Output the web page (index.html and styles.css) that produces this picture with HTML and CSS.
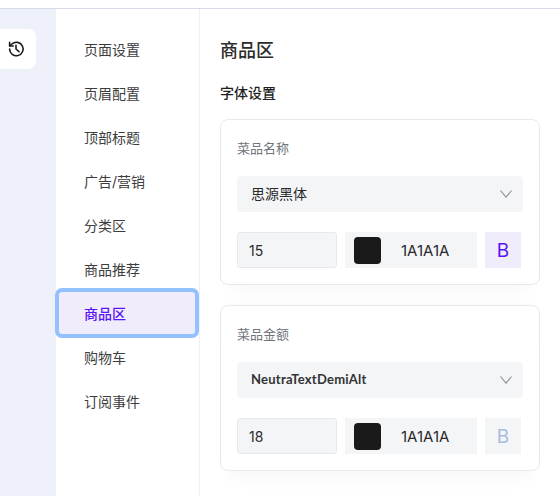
FILE: index.html
```html
<!DOCTYPE html>
<html lang="zh-CN">
<head>
<meta charset="utf-8">
<title>商品区</title>
<link rel="stylesheet" href="styles.css">
</head>
<body>
<div class="app">
  <aside class="rail">
    <button class="history" aria-label="历史记录">
      <svg width="18" height="18" viewBox="0 0 24 24" fill="none" stroke="#1a1a1a" stroke-width="2.1" stroke-linecap="round" stroke-linejoin="round"><path d="M3.5 12a9 9 0 1 0 3-6.7L3.5 8"/><path d="M3.5 3.2V8h4.8"/><path d="M12 7v5l4 3.5"/></svg>
    </button>
  </aside>
  <nav class="nav">
    <a class="nav-item">页面设置</a>
    <a class="nav-item">页眉配置</a>
    <a class="nav-item">顶部标题</a>
    <a class="nav-item">广告/营销</a>
    <a class="nav-item">分类区</a>
    <a class="nav-item">商品推荐</a>
    <a class="nav-item active">商品区</a>
    <a class="nav-item">购物车</a>
    <a class="nav-item">订阅事件</a>
  </nav>
  <main class="main">
    <h1 class="title">商品区</h1>
    <h2 class="subtitle">字体设置</h2>
    <section class="card">
      <div class="label">菜品名称</div>
      <div class="select"><span class="value">思源黑体</span>
        <svg class="chev" width="12" height="8" viewBox="0 0 12 8" fill="none" stroke="#8b8f98" stroke-width="1.1"><path d="M.5 .5L6 7.2 11.5 .5"/></svg>
      </div>
      <div class="controls">
        <div class="size">15</div>
        <div class="color"><i class="swatch"></i><span>1A1A1A</span></div>
        <div class="bold on">B</div>
      </div>
    </section>
    <section class="card">
      <div class="label">菜品金额</div>
      <div class="select"><span class="value latin">NeutraTextDemiAlt</span>
        <svg class="chev" width="12" height="8" viewBox="0 0 12 8" fill="none" stroke="#8b8f98" stroke-width="1.1"><path d="M.5 .5L6 7.2 11.5 .5"/></svg>
      </div>
      <div class="controls">
        <div class="size">18</div>
        <div class="color"><i class="swatch"></i><span>1A1A1A</span></div>
        <div class="bold">B</div>
      </div>
    </section>
  </main>
</div>
</body>
</html>
```
FILE: styles.css
```css
* { box-sizing: border-box; }
html, body { margin: 0; height: 100%; overflow: hidden; background: #fff; }
body { font-family: Inter, "Noto Sans CJK SC", sans-serif; color: #1a1a1a; padding-top: 8px; }
.app { display: flex; height: 488px; border-top: 1px solid #d5d9e8; }
.rail { width: 56px; flex: none; background: #eef1f9; padding-top: 20px; }
.history { display: flex; align-items: center; justify-content: center; width: 36px; height: 40px; padding: 0 4px 0 0; border: 0; background: #fff; border-radius: 0 8px 8px 0; }
.nav { width: 144px; flex: none; display: flex; flex-direction: column; border-right: 1px solid #eef0f4; padding-top: 19px; }
.nav-item { height: 44px; flex: none; display: flex; align-items: center; padding-left: 28px; font-size: 14px; line-height: 20px; color: #3d3d3d; }
.nav-item.active { position: relative; background: #f0ecfc; color: #5b14f5; font-weight: 500; border-radius: 7px; margin: -4px 0 -2px -1px; padding: 2px 0 0 29px; box-shadow: inset 0 0 0 1px #fff; outline: 4px solid #93c1fd; outline-offset: -4px; height: 50px; }
.main { flex: 1; min-width: 0; padding: 0 20px; }
.title { margin: 31px 0 0; font-size: 18px; line-height: 22px; font-weight: 500; color: #2b2b2b; }
.subtitle { margin: 21px 0 0; font-size: 14px; line-height: 20px; font-weight: 500; color: #1f1f1f; }
.card { height: 166px; margin-top: 16px; padding: 0 16px; border: 1px solid #e8e9ee; border-radius: 8px; background: #fff; box-shadow: 0 -7px 10px -8px rgba(0, 0, 0, .025), 0 18px 18px -10px rgba(0, 0, 0, .03); }
.card + .card { margin-top: 20px; }
.label { margin-top: 18px; font-size: 13px; line-height: 20px; color: #70747c; }
.select { display: flex; align-items: center; justify-content: space-between; height: 36px; margin-top: 18px; padding: 0 11px 0 14px; background: #f4f5f7; border-radius: 4px; font-size: 14px; color: #2a2a2a; }
.value { margin-top: -2px; }
.latin { font-family: Lato, sans-serif; font-weight: 700; font-size: 13px; letter-spacing: .25px; color: #333; }
.controls { display: flex; gap: 8px; margin-top: 20px; }
.size { width: 100px; height: 36px; display: flex; align-items: center; padding-left: 11px; background: #f4f5f7; border: 1px solid #e8e9ee; border-radius: 3px; font-size: 14px; color: #2a2a2a; }
.color { width: 132px; height: 36px; display: flex; align-items: center; padding-left: 9px; background: #f4f5f7; font-size: 15px; color: #2a2a2a; }
.swatch { width: 27px; height: 27px; background: #1a1a1a; border-radius: 4px; flex: none; }
.color span { margin-left: 20px; }
.bold { width: 36px; height: 36px; display: flex; align-items: center; justify-content: center; background: #f4f5f7; color: #a9bcdc; font-size: 19px; font-weight: 400; }
.bold.on { background: #f0ecfc; color: #5b14f5; }
```
